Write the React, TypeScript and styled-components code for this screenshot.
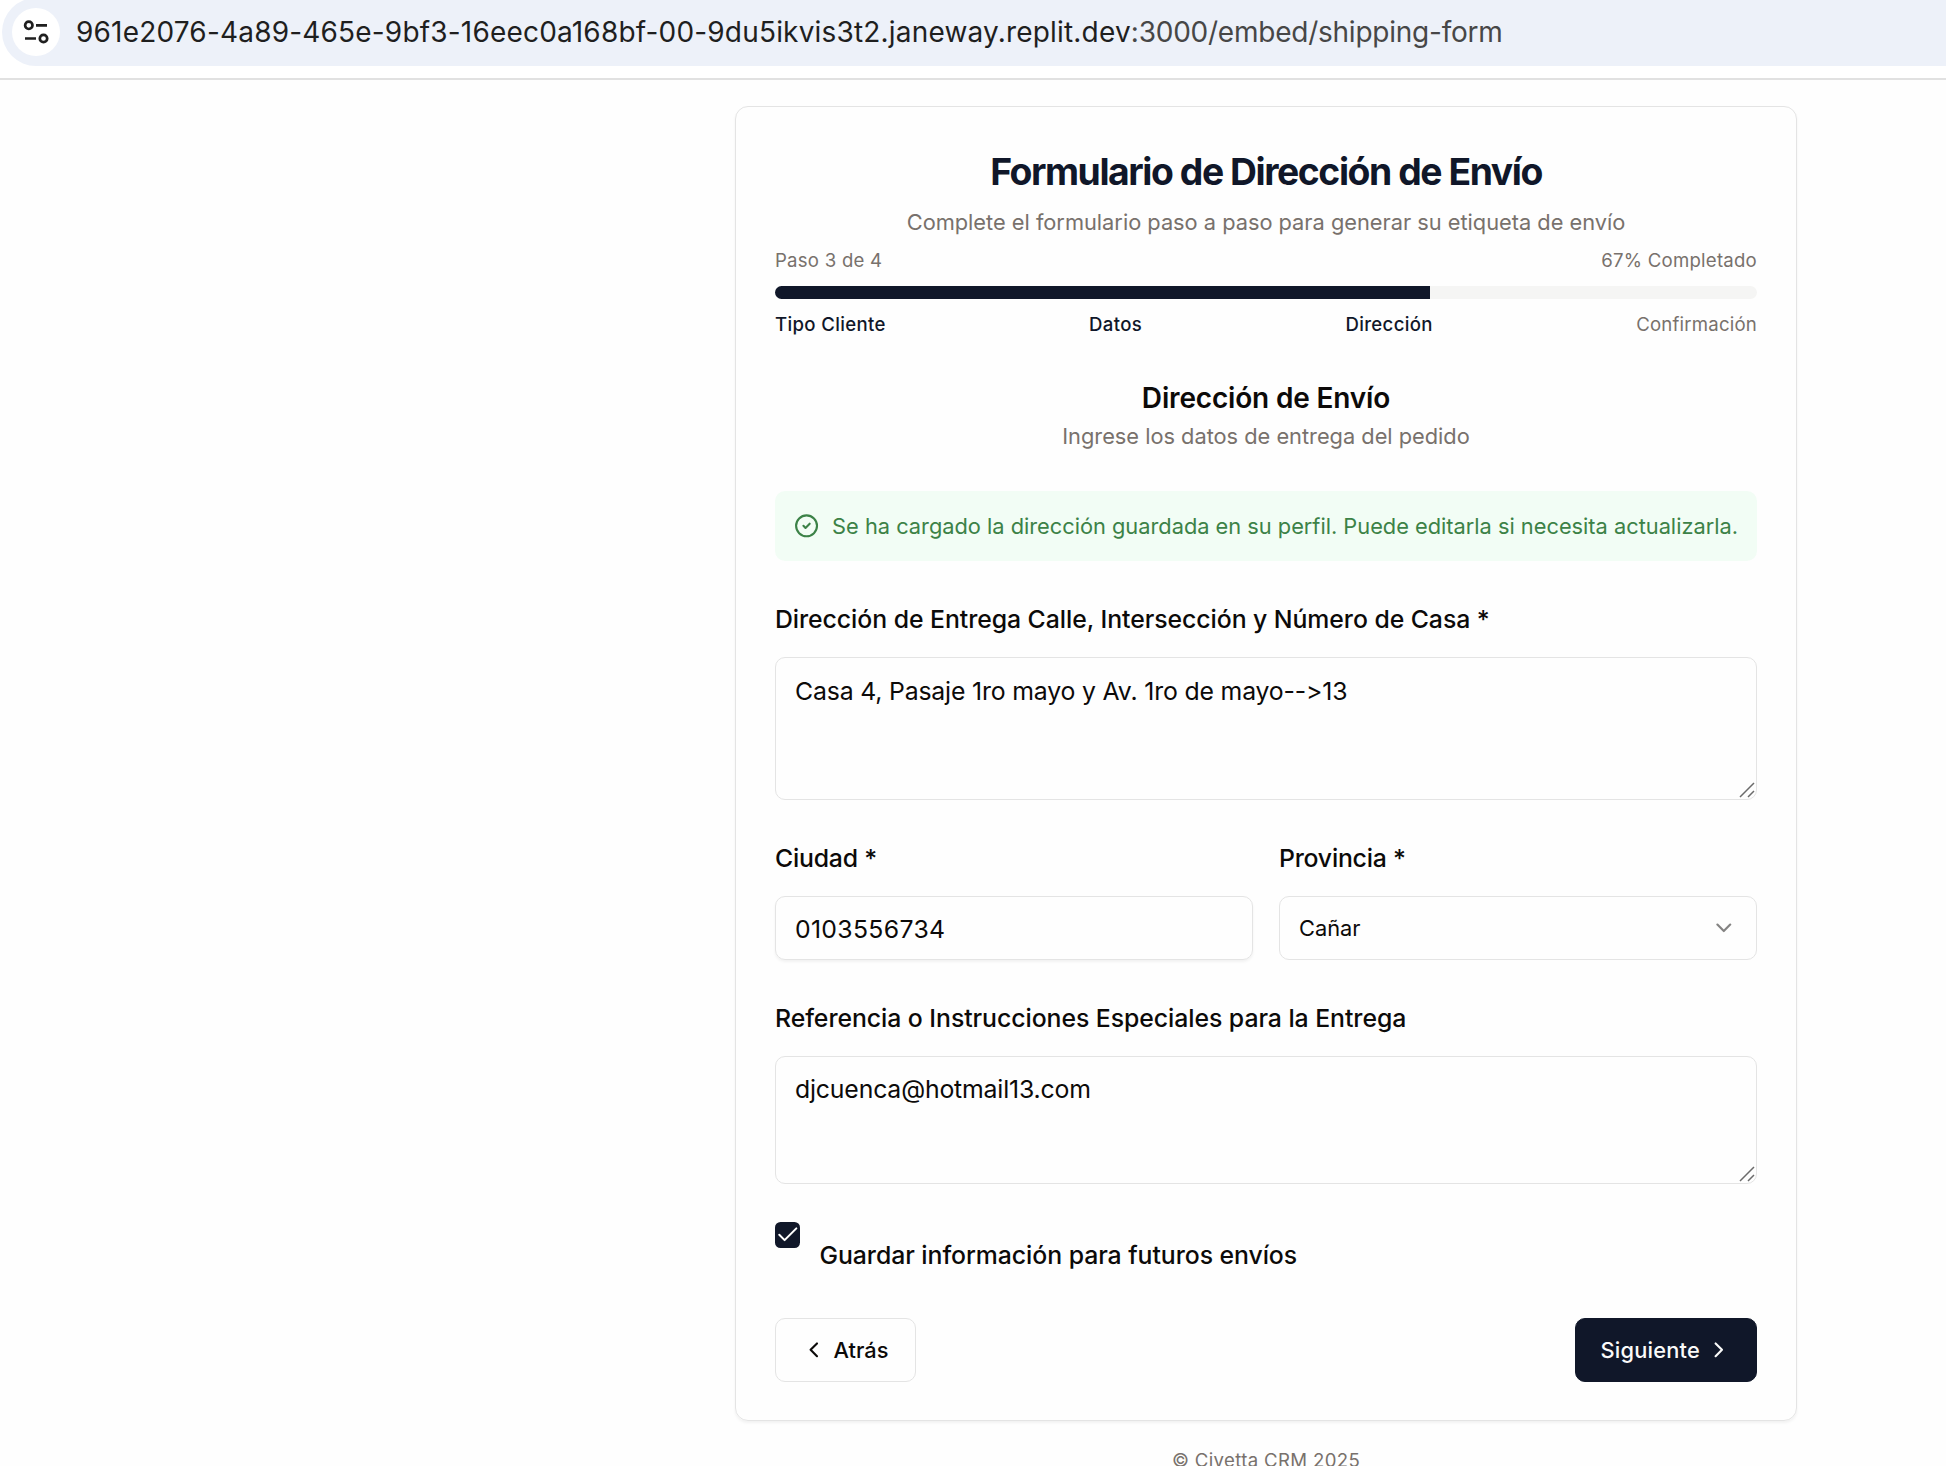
import React from "react";
import styled, { createGlobalStyle } from "styled-components";
import { Check, ChevronDown, ChevronLeft, ChevronRight, CircleCheck } from "lucide-react";

const navy = "#101729";
const ink = "#0c0a09";
const muted = "#78716c";
const line = "#e4e4e4";

const GlobalStyle = createGlobalStyle`
  * { box-sizing: border-box; }
  html, body { margin: 0; height: 1466px; overflow: hidden; background: #fefefe; }
  body, input, textarea, button {
    font-family: Inter, "Liberation Sans", sans-serif;
    font-feature-settings: "calt" 0;
  }
  h1, h2, p { margin: 0; }
`;

const Page = styled.div`
  height: 1466px;
  overflow: hidden;
  color: ${ink};
`;

const Toolbar = styled.header`
  height: 80px;
  padding-left: 2px;
  background: #fff;
  border-bottom: 2px solid #e1e1e1;
`;

const AddressBar = styled.div`
  display: flex;
  align-items: center;
  gap: 16px;
  height: 68px;
  margin-top: -2px;
  padding-left: 10px;
  border-radius: 34px 0 0 34px;
  background: #edf1f9;
`;

const ToolbarClip = styled.div`
  height: 66px;
  overflow: hidden;
`;

const SiteInfo = styled.span`
  display: grid;
  place-items: center;
  width: 48px;
  height: 48px;
  border-radius: 50%;
  background: #fff;
`;

const Url = styled.div`
  font-size: 28px;
  line-height: 34px;
  white-space: nowrap;
  color: #1f1f1f;
  letter-spacing: 0.0066em;
`;

const UrlPath = styled.span`
  color: #474747;
  letter-spacing: -0.0085em;
`;

const Main = styled.main`
  display: flex;
  flex-direction: column;
  align-items: center;
  width: 1062px;
  margin-left: 735px;
  padding-top: 26px;
`;

const Card = styled.section`
  width: 100%;
  height: 1315px;
  padding: 42px 39px 38px;
  border: 1px solid ${line};
  border-radius: 13px;
  box-shadow: 0 2px 3px rgba(0, 0, 0, 0.05);
`;

const Title = styled.h1`
  font-size: 37.3px;
  line-height: 45px;
  font-weight: 700;
  letter-spacing: -0.0385em;
  text-align: center;
  color: ${navy};
`;

const Subtitle = styled.p<{ $top: number }>`
  margin-top: ${(p) => p.$top}px;
  font-size: 21.8px;
  line-height: 32px;
  text-align: center;
  letter-spacing: -0.0005em;
  color: ${muted};
`;

const Spread = styled.div<{ $top: number }>`
  display: flex;
  justify-content: space-between;
  margin-top: ${(p) => p.$top}px;
  font-size: 18.6px;
  line-height: 26px;
  letter-spacing: 0.013em;
  color: ${muted};
`;

const Track = styled.div`
  height: 13px;
  margin-top: 13px;
  border-radius: 6.5px;
  overflow: hidden;
  background: #f5f5f4;
`;

const Fill = styled.div`
  height: 100%;
  background: ${navy};
`;

const Step = styled.span<{ $reached: boolean }>`
  font-weight: ${(p) => (p.$reached ? 500 : 400)};
  letter-spacing: ${(p) => (p.$reached ? "0.018em" : "0.011em")};
  color: ${(p) => (p.$reached ? navy : muted)};
`;

const SectionTitle = styled.h2`
  margin-top: 44px;
  font-size: 28px;
  line-height: 35px;
  font-weight: 600;
  letter-spacing: -0.006em;
  text-align: center;
`;

const Notice = styled.div`
  display: flex;
  align-items: center;
  gap: 13px;
  height: 70px;
  margin-top: 39px;
  padding: 0 19px;
  border-radius: 10px;
  background: #f2fdf5;
  color: #3c8247;
  font-size: 21.8px;
  letter-spacing: -0.0003em;
  white-space: nowrap;
`;

const Field = styled.div`
  display: flex;
  flex-direction: column;
  gap: 25px;
  margin-top: 45px;
`;

const FieldRow = styled.div`
  display: grid;
  grid-template-columns: 1fr 1fr;
  gap: 26px;
`;

const Label = styled.label<{ $tight?: boolean }>`
  font-size: 24.8px;
  line-height: 26px;
  font-weight: 500;
  letter-spacing: ${(p) => (p.$tight ? "-0.009em" : "-0.0022em")};
`;

const AreaWrap = styled.div<{ $height: number }>`
  position: relative;
  height: ${(p) => p.$height}px;
`;

const Area = styled.textarea<{ $padTop: number }>`
  display: block;
  width: 100%;
  height: 100%;
  padding: ${(p) => p.$padTop}px 19px 0;
  border: 1px solid ${line};
  border-radius: 10px;
  outline: none;
  resize: none;
  overflow: hidden;
  background: transparent;
  color: ${ink};
  font-size: 24.8px;
  line-height: 38px;
  letter-spacing: -0.0067em;
`;

const Grip = styled.svg`
  position: absolute;
  right: 2px;
  bottom: 2px;
  pointer-events: none;
`;

const Input = styled.input`
  width: 100%;
  height: 64px;
  padding: 2px 19px 0;
  border: 1px solid ${line};
  border-radius: 10px;
  outline: none;
  background: transparent;
  box-shadow: 0 2px 3px rgba(0, 0, 0, 0.05);
  color: ${ink};
  font-size: 24.8px;
  letter-spacing: 0.0128em;
`;

const Select = styled.button`
  display: flex;
  align-items: center;
  justify-content: space-between;
  width: 100%;
  height: 64px;
  padding: 0 19px;
  border: 1px solid ${line};
  border-radius: 10px;
  background: transparent;
  color: ${ink};
  font-size: 21.8px;

  svg { opacity: 0.5; }
`;

const SaveRow = styled.div`
  display: flex;
  align-items: flex-start;
  gap: 19.5px;
  height: 46px;
  margin-top: 38px;

  label { margin-top: 20px; }
`;

const Checkbox = styled.span`
  display: grid;
  place-items: center;
  width: 25px;
  height: 26px;
  border-radius: 5.5px;
  background: ${navy};
  color: #fff;
`;

const Actions = styled.div`
  display: flex;
  justify-content: space-between;
  margin-top: 50px;
`;

const Button = styled.button<{ $primary?: boolean }>`
  display: flex;
  align-items: center;
  gap: ${(p) => (p.$primary ? 6.4 : 7)}px;
  height: 64px;
  padding: ${(p) => (p.$primary ? "0 24px 0 24.5px" : "0 26.5px 0 25px")};
  border: 1px solid ${(p) => (p.$primary ? navy : line)};
  border-radius: 10px;
  background: ${(p) => (p.$primary ? navy : "transparent")};
  color: ${(p) => (p.$primary ? "#fafaf9" : ink)};
  font-size: 21.8px;
  font-weight: 500;
  letter-spacing: ${(p) => (p.$primary ? "0.01em" : "0")};
`;

const Footer = styled.footer`
  margin-top: 26px;
  font-size: 18.6px;
  line-height: 26px;
  letter-spacing: 0.0184em;
  color: ${muted};
`;

const iconSize = 25.6;
const progress = 66.67;

const steps = [
  { name: "Tipo Cliente", reached: true },
  { name: "Datos", reached: true },
  { name: "Dirección", reached: true },
  { name: "Confirmación", reached: false },
];

function TuneIcon() {
  return (
    <svg width="48" height="48" viewBox="0 0 48 48" fill="none" stroke="#1f1f1f" strokeWidth="2.7">
      <circle cx="16.8" cy="17.3" r="3.7" />
      <path d="M24 17.3h11M13 30.5h11" />
      <circle cx="31.5" cy="30.5" r="3.7" />
    </svg>
  );
}

function TextArea({ id, height, padTop, value }: { id: string; height: number; padTop: number; value: string }) {
  return (
    <AreaWrap $height={height}>
      <Area id={id} $padTop={padTop} defaultValue={value} spellCheck={false} />
      <Grip width="16" height="16" viewBox="0 0 16 16" stroke="#6b6b6b" strokeWidth="1.5">
        <path d="M1 15 15 1M9 15l6-6" />
      </Grip>
    </AreaWrap>
  );
}

export default function App() {
  return (
    <Page>
      <GlobalStyle />
      <Toolbar>
        <ToolbarClip>
          <AddressBar>
            <SiteInfo>
              <TuneIcon />
            </SiteInfo>
            <Url>
              961e2076-4a89-465e-9bf3-16eec0a168bf-00-9du5ikvis3t2.janeway.replit.dev
              <UrlPath>:3000/embed/shipping-form</UrlPath>
            </Url>
          </AddressBar>
        </ToolbarClip>
      </Toolbar>
      <Main>
        <Card>
          <Title>Formulario de Dirección de Envío</Title>
          <Subtitle $top={12}>Complete el formulario paso a paso para generar su etiqueta de envío</Subtitle>
          <Spread $top={9}>
            <span>Paso 3 de 4</span>
            <span>67% Completado</span>
          </Spread>
          <Track>
            <Fill style={{ width: `${progress}%` }} />
          </Track>
          <Spread $top={12}>
            {steps.map((s) => (
              <Step key={s.name} $reached={s.reached}>
                {s.name}
              </Step>
            ))}
          </Spread>

          <SectionTitle>Dirección de Envío</SectionTitle>
          <Subtitle $top={4}>Ingrese los datos de entrega del pedido</Subtitle>

          <Notice>
            <CircleCheck size={iconSize} />
            <span>Se ha cargado la dirección guardada en su perfil. Puede editarla si necesita actualizarla.</span>
          </Notice>

          <Field>
            <Label htmlFor="address">Dirección de Entrega Calle, Intersección y Número de Casa *</Label>
            <TextArea id="address" height={143} padTop={14} value="Casa 4, Pasaje 1ro mayo y Av. 1ro de mayo-->13" />
          </Field>

          <FieldRow>
            <Field>
              <Label $tight htmlFor="city">Ciudad *</Label>
              <Input id="city" defaultValue="0103556734" />
            </Field>
            <Field>
              <Label $tight>Provincia *</Label>
              <Select type="button">
                <span>Cañar</span>
                <ChevronDown size={iconSize} />
              </Select>
            </Field>
          </FieldRow>

          <Field>
            <Label htmlFor="notes">Referencia o Instrucciones Especiales para la Entrega</Label>
            <TextArea id="notes" height={128} padTop={13} value="djcuenca@hotmail13.com" />
          </Field>

          <SaveRow>
            <Checkbox role="checkbox" aria-checked="true">
              <Check size={iconSize} strokeWidth={1.9} />
            </Checkbox>
            <Label>Guardar información para futuros envíos</Label>
          </SaveRow>

          <Actions>
            <Button type="button">
              <ChevronLeft size={iconSize} />
              Atrás
            </Button>
            <Button type="button" $primary>
              Siguiente
              <ChevronRight size={iconSize} />
            </Button>
          </Actions>
        </Card>
        <Footer>© Civetta CRM 2025</Footer>
      </Main>
    </Page>
  );
}
